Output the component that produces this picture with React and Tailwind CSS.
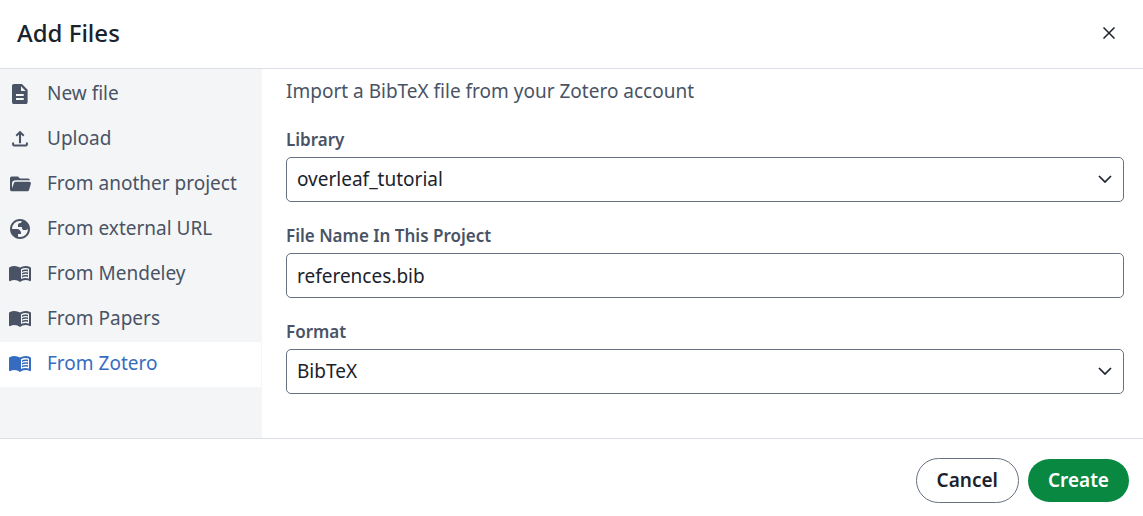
const icons = {
  file: 'M320-240h310v-80H320v80Zm0-160h310v-80H320v80ZM236-80q-32 0-54-22t-22-54v-648q0-32 22-54t54-22h322l226 226v498q0 32-22 54t-54 22H236Zm284-520h190L520-790v190Z',
  upload: 'M438-310v-354l-82 82-54-54 178-178 178 178-54 54-82-82v354h-84ZM240-184q-31 0-53.500-22T164-260v-84h80v80h472v-80h80v84q0 32-22.500 54T720-184H240Z',
  folder: 'M152-190q-30 0-51-21t-21-51v-446q0-30 21-51t51-21h248l80 76h320q30 0 51 21t25 49H314q-62 0-108 36t-46 92v206l77-220q8-22 27-36t43-14h550q32 0 50 26t8 56l-74 246q-8 24-27 38t-43 14H152Z',
  globe: 'M480-80q-83 0-156-31.500T197-197q-54-54-85.500-127T80-480q0-83 31.500-156T197-763q54-54 127-85.500T480-880q83 0 156 31.500T763-763q54 54 85.500 127T880-480q0 83-31.500 156T763-197q-54 54-127 85.500T480-80Zm0-80q134 0 227-93t93-227q0-7-.5-14.500T799-507q-5 29-27 48t-52 19h-80q-33 0-56.500-23.500T560-520v-40H400v-80q0-33 23.500-56.500T480-720h40q0-23 12.500-40.500T563-789q-20-5-40.500-8t-42.500-3q-134 0-227 93t-93 227h200q66 0 113 47t47 113v40H400v110q20 5 39.500 7.500T480-160Z',
  book: 'M560-564v-68q33-14 67.500-21t72.500-7q26 0 51 4t49 10v64q-24-9-48.500-13.500T700-600q-38 0-73 9.500T560-564Zm0 220v-68q33-14 67.500-21t72.500-7q26 0 51 4t49 10v64q-24-9-48.500-13.500T700-380q-38 0-73 9t-67 27Zm0-110v-68q33-14 67.500-21t72.500-7q26 0 51 4t49 10v64q-24-9-48.500-13.500T700-490q-38 0-73 9.500T560-454ZM480-160q-48-38-104-59t-116-21q-42 0-82.500 11T100-198q-21 11-40.500-1T40-234v-482q0-11 5.500-21T62-752q46-24 96-36t102-12q58 0 113.500 15T480-740q51-30 106.500-45T700-800q52 0 102 12t96 36q11 5 16.500 15t5.500 21v482q0 23-19.500 35t-40.500 1q-37-20-77.500-31T700-240q-60 0-116 21t-104 59Zm40-118q44-21 88.500-31.500T700-320q36 0 70.500 6t69.500 18v-396q-33-14-68.500-21t-71.500-7q-47 0-93 12t-87 36v394Z',
};

const sources = [
  { label: 'New file', icon: 'file' },
  { label: 'Upload', icon: 'upload' },
  { label: 'From another project', icon: 'folder' },
  { label: 'From external URL', icon: 'globe' },
  { label: 'From Mendeley', icon: 'book' },
  { label: 'From Papers', icon: 'book' },
  { label: 'From Zotero', icon: 'book', active: true },
];

function Icon({ name }) {
  return (
    <svg viewBox="0 -960 960 960" fill="currentColor" className="size-6 shrink-0" aria-hidden="true">
      <path d={icons[name]} />
    </svg>
  );
}

function SourceItem({ label, icon, active }) {
  return (
    <li>
      <button
        type="button"
        aria-current={active ? 'true' : undefined}
        className={
          active
            ? 'flex h-[45px] w-full items-center gap-[15px] bg-white pb-0.5 pl-2 text-left text-[#366cbf]'
            : 'flex h-[45px] w-full items-center gap-[15px] pb-0.5 pl-2 text-left text-[#495365]'
        }
      >
        <Icon name={icon} />
        {label}
      </button>
    </li>
  );
}

const control =
  'h-[45px] w-full appearance-none rounded-[5px] border border-[#677283] bg-white px-2.5 text-[19px] text-[#1b222c]';

function Field({ id, label, children }) {
  return (
    <div>
      <label htmlFor={id} className="block pb-[5px] text-[17px] leading-6 font-semibold">
        {label}
      </label>
      {children}
    </div>
  );
}

function Select({ id, value }) {
  return (
    <div className="relative">
      <select id={id} defaultValue={value} className={control}>
        <option>{value}</option>
      </select>
      <svg
        viewBox="0 0 14 8"
        fill="none"
        stroke="#1b222c"
        strokeWidth="1.700"
        className="pointer-events-none absolute top-[18px] right-3 h-2 w-3.5"
        aria-hidden="true"
      >
        <path d="M1 1l6 6 6-6" />
      </svg>
    </div>
  );
}

export default function App() {
  return (
    <div
      role="dialog"
      aria-labelledby="dialog-title"
      className="bg-white font-['Noto_Sans',sans-serif] text-[19px] text-[#495365]"
    >
      <header className="flex h-[69px] items-center justify-between border-b border-[#dcdfe6] pr-6 pb-0.5 pl-[17px]">
        <h1 id="dialog-title" className="text-2xl font-medium text-[#1b222c]">
          Add Files
        </h1>
        <button type="button" aria-label="Close" className="flex size-5 items-center justify-center text-[#1b222c]">
          <svg viewBox="0 0 12 12" stroke="currentColor" strokeWidth="1.500" className="size-3" aria-hidden="true">
            <path d="M.5 .5l11 11M11.500 .5l-11 11" />
          </svg>
        </button>
      </header>

      <div className="flex">
        <nav aria-label="File source" className="w-[262px] shrink-0 bg-[#f4f5f6] pt-[3px] pr-px">
          <ul>
            {sources.map((source) => (
              <SourceItem key={source.label} {...source} />
            ))}
          </ul>
        </nav>
        <form id="import-form" className="min-w-0 grow pt-2 pr-[19px] pb-11 pl-6">
          <p className="pb-[23px] leading-7">Import a BibTeX file from your Zotero account</p>
          <div className="flex flex-col gap-[22px]">
            <Field id="library" label="Library">
              <Select id="library" value="overleaf_tutorial" />
            </Field>
            <Field id="file-name" label="File Name In This Project">
              <input id="file-name" type="text" defaultValue="references.bib" className={control} />
            </Field>
            <Field id="format" label="Format">
              <Select id="format" value="BibTeX" />
            </Field>
          </div>
        </form>
      </div>

      <footer className="flex items-center justify-end gap-[9px] border-t border-[#dcdfe6] pt-[19px] pr-3.5 pb-3">
        <button
          type="button"
          className="h-[45px] rounded-full border border-[#677283] px-5 font-semibold text-[#1b222c]"
        >
          Cancel
        </button>
        <button
          type="submit"
          form="import-form"
          className="h-[43px] rounded-full bg-[#098842] px-5 font-semibold text-white"
        >
          Create
        </button>
      </footer>
    </div>
  );
}
